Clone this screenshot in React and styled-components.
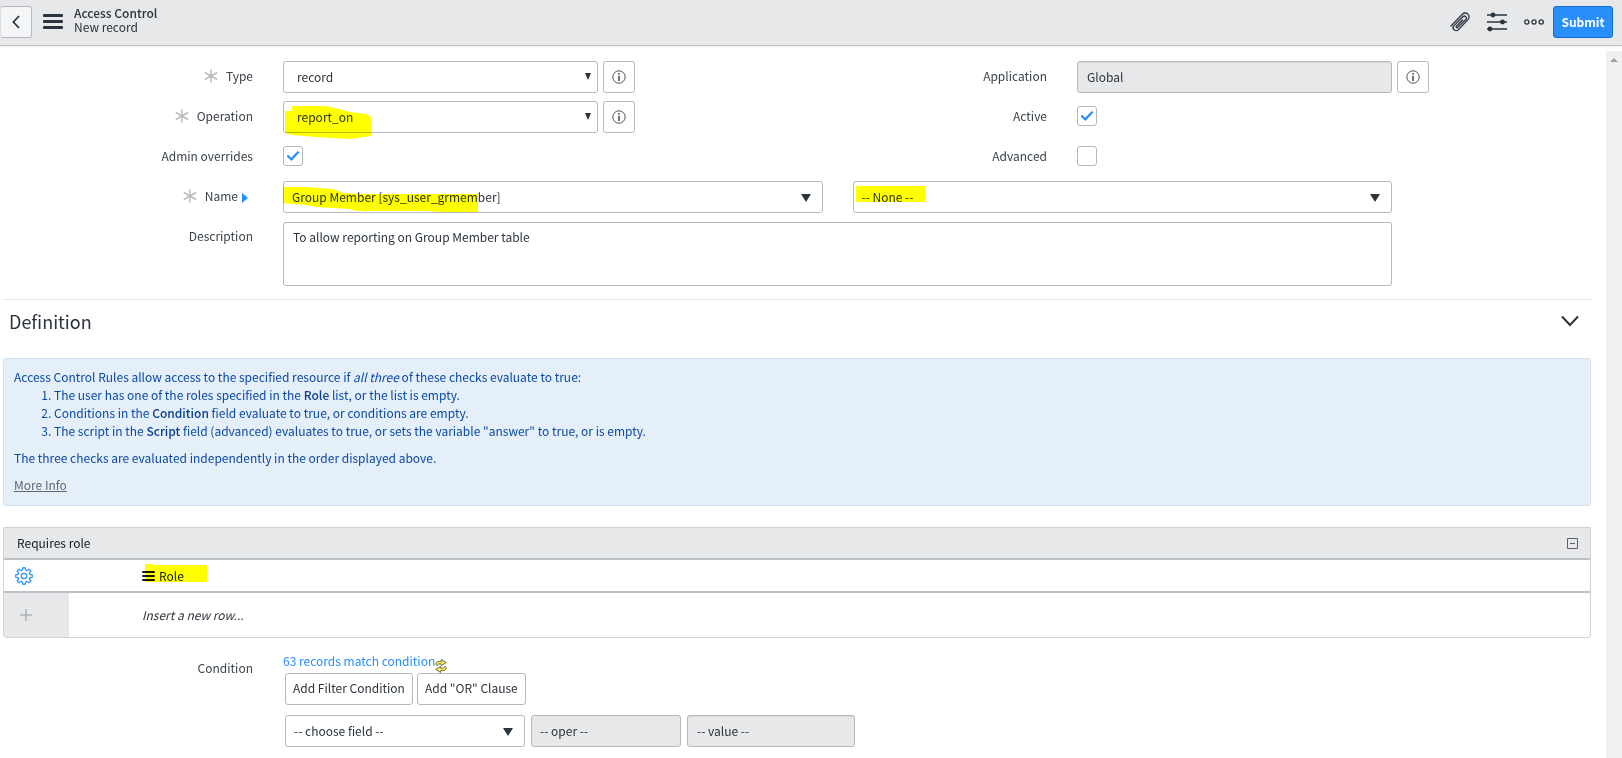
import React from "react";
import styled, { createGlobalStyle, css } from "styled-components";

const c = {
  ink: "#2b343e",
  label: "#3a424a",
  line: "#bdc0c4",
  field: "#b5b8bc",
  bar: "#e6e8ea",
  blue: "#278efc",
  infoText: "#0b4aa3",
};

const GlobalStyle = createGlobalStyle`
  *, *::before, *::after { box-sizing: border-box; }
  body {
    margin: 0;
    background: #fff;
    color: ${c.ink};
    font-family: "Noto Sans CJK SC", "Open Sans", sans-serif;
    font-size: 12px;
    line-height: 18px;
  }
  button, input, select, textarea { font: inherit; color: inherit; margin: 0; }
`;

const Page = styled.div`
  display: flex;
  flex-direction: column;
  min-height: 100vh;
`;

/* ---------- header ---------- */

const Header = styled.header`
  display: flex;
  align-items: center;
  height: 46px;
  padding: 0 9px 2px 0;
  background: ${c.bar};
  border-bottom: 1px solid ${c.line};
  box-shadow: 0 1px 2px rgba(0, 0, 0, 0.08);
`;

const BackButton = styled.button`
  display: flex;
  align-items: center;
  justify-content: center;
  width: 32px;
  height: 32px;
  padding: 0;
  background: #f3f5f7;
  border: 1px solid ${c.field};
  border-left-color: #dcdee0;
  border-radius: 3px;
`;

const IconButton = styled.button`
  display: flex;
  align-items: center;
  justify-content: center;
  padding: 0;
  border: 0;
  background: none;
  color: ${(p) => p.$color || c.ink};
`;

const MenuButton = styled(IconButton)`
  margin: 0 11px;
`;

const Heading = styled.div`
  padding-bottom: 3px;
  line-height: 14px;
`;

const Title = styled.h1`
  margin: 0;
  font-size: 12px;
  font-weight: 500;
`;

const Actions = styled.div`
  display: flex;
  align-items: center;
  gap: 17px;
  margin-left: auto;
`;

const Submit = styled.button`
  height: 32px;
  width: 60px;
  margin-left: -8px;
  padding: 0;
  background: ${c.blue};
  border: 1px solid #0f6fd6;
  border-radius: 3px;
  color: #fff;
  font-weight: 700;
`;

/* ---------- page body ---------- */

const Body = styled.div`
  display: flex;
  flex: 1;
`;

const Content = styled.main`
  flex: 1;
  min-width: 0;
  padding: 15px 15px 0 3px;
`;

const ScrollTrack = styled.div`
  width: 16px;
  margin-top: 5px;
  padding-top: 7px;
  background: #f0f0f0;
  display: flex;
  justify-content: center;
  align-items: flex-start;
`;

/* ---------- form ---------- */

const Columns = styled.div`
  display: grid;
  grid-template-columns: 1fr 1fr;
`;

const Row = styled.div`
  display: grid;
  grid-template-columns: ${(p) => (p.$wide ? "265fr 1139fr 184fr" : "265fr 345fr 184fr")};
  margin-bottom: ${(p) => (p.$last ? 0 : "8px")};
`;

const LabelCell = styled.div`
  display: flex;
  justify-content: flex-end;
  align-items: center;
  gap: 8px;
  height: 32px;
  padding: 0 15px 2px 0;
  color: ${c.label};
`;

const FieldCell = styled.div`
  display: flex;
  align-items: center;
  gap: 30px;
  min-height: 32px;
  padding: ${(p) => (p.$area ? "1px 15px 0" : p.$check ? "0 15px 2px" : "0 15px")};
`;

const AfterCell = styled.div`
  margin-left: -10px;
`;

const Box = styled.div`
  position: relative;
  flex: ${(p) => (p.$width ? "none" : "1")};
  width: ${(p) => (p.$width ? `${p.$width}px` : "auto")};
  min-width: 0;
`;

const control = css`
  display: block;
  width: 100%;
  height: 32px;
  padding: 0 9px 1px;
  background: #fff;
  border: 1px solid ${c.field};
  border-radius: 3px;
  color: ${c.ink};
  opacity: 1;
`;

const SelectControl = styled.select`
  ${control}
  appearance: none;
  padding-left: ${(p) => (p.$indent ? "13px" : "8px")};
  ${(p) => p.disabled && `background: ${c.bar};`}
`;

const TextControl = styled.input`
  ${control}
  ${(p) => p.readOnly && `background: ${c.bar}; box-shadow: inset 0 1px 1px rgba(0,0,0,.07);`}
`;

const AreaControl = styled.textarea`
  ${control}
  height: 64px;
  padding: 5px 9px;
  resize: none;
`;

const Arrow = styled.svg`
  position: absolute;
  top: ${(p) => (p.$small ? "12px" : "13px")};
  right: ${(p) => (p.$small ? "7px" : "12px")};
  fill: #2b333b;
  pointer-events: none;
`;

const Marker = styled.svg`
  position: absolute;
  top: 0;
  left: 0;
  overflow: visible;
  fill: #ff0;
  mix-blend-mode: multiply;
  pointer-events: none;
`;

const Expander = styled.svg`
  margin: 3px 5px 0 -4px;
  fill: ${c.blue};
`;

const Check = styled.input`
  appearance: none;
  width: 20px;
  height: 20px;
  background: #fff;
  border: 1px solid ${c.field};
  border-radius: 3px;
  display: grid;
  place-items: center;
  &:checked::after {
    content: "";
    width: 13px;
    height: 10px;
    background: ${c.blue};
    clip-path: polygon(0 52%, 12% 38%, 36% 68%, 87% 0, 100% 12%, 38% 100%);
  }
`;

const InfoButton = styled.button`
  display: flex;
  align-items: center;
  justify-content: center;
  width: 32px;
  height: 32px;
  padding: 0;
  background: #fff;
  border: 1px solid ${c.field};
  border-radius: 3px;
  color: #4a5056;
`;

/* ---------- definition ---------- */

const SectionHead = styled.div`
  display: flex;
  align-items: center;
  justify-content: space-between;
  height: 44px;
  margin-top: 13px;
  padding: 0 12px 2px 6px;
  border-top: 1px solid #e2e4e6;
`;

const SectionTitle = styled.h2`
  margin: 0;
  font-size: 18px;
  line-height: 28px;
  font-weight: 400;
`;

const Info = styled.section`
  margin-top: 15px;
  padding: 9px 10px 11px;
  background: #e5effa;
  border: 1px solid #cfe0f2;
  border-radius: 3px;
  color: ${c.infoText};
  p { margin: 0 0 9px; }
  p:first-child, p:last-child { margin: 0; }
  ol { margin: 0 0 9px; padding-left: 40px; }
  b { font-weight: 500; color: #0a408f; }
`;

const MoreInfo = styled.a`
  color: #63686d;
  text-decoration: underline;
`;

/* ---------- roles list ---------- */

const Panel = styled.section`
  margin: 21px 0 15px;
  border: 1px solid #d0d2d5;
  border-radius: 0 0 3px 3px;
`;

const PanelHead = styled.div`
  display: flex;
  align-items: center;
  justify-content: space-between;
  height: 32px;
  padding: 0 12px 0 13px;
  background: ${c.bar};
  border-bottom: 2px solid ${c.line};
`;

const PanelTitle = styled.h3`
  margin: 0;
  font-size: 12px;
  font-weight: 400;
  color: #141b22;
`;

const RoleTable = styled.table`
  width: 100%;
  border-collapse: separate;
  border-spacing: 0;
  text-align: left;
`;

const HeadCell = styled.th`
  height: 33px;
  width: ${(p) => (p.$tool ? "65px" : "auto")};
  padding: 0 0 0 ${(p) => (p.$tool ? "11px" : "73px")};
  border-bottom: 2px solid ${c.line};
  font-weight: 400;
  color: #141b22;
`;

const ColumnName = styled.span`
  position: relative;
  display: inline-flex;
  align-items: center;
  gap: 4px;
`;

const ToolCell = styled.td`
  height: 44px;
  padding: 0 0 0 16px;
  background: ${c.bar};
`;

const NewRowCell = styled.td`
  padding: 0 0 0 73px;
  font-style: italic;
`;

/* ---------- condition ---------- */

const ConditionCell = styled.div`
  padding: 0 15px;
`;

const MatchLine = styled.div`
  display: flex;
  align-items: flex-end;
  height: 20px;
`;

const MatchLink = styled.a`
  padding-bottom: 3px;
  color: ${c.blue};
  text-decoration: none;
`;

const Line = styled.div`
  display: flex;
  gap: ${(p) => p.$gap}px;
  margin: 0 0 10px 2px;
`;

const PlainButton = styled.button`
  height: 32px;
  padding: 0 7px 2px;
  background: #fff;
  border: 1px solid ${c.field};
  border-radius: 3px;
  white-space: nowrap;
`;

/* ---------- drawings ---------- */

const Bars = ({ w, h, t }) => (
  <svg width={w} height={h} fill="currentColor" aria-hidden="true">
    <rect width={w} height={t} rx="1" />
    <rect y={(h - t) / 2} width={w} height={t} rx="1" />
    <rect y={h - t} width={w} height={t} rx="1" />
  </svg>
);

const Asterisk = () => (
  <svg width="14" height="14" viewBox="0 0 14 14" stroke="#b9bbbd" strokeWidth="1.5" aria-label="Mandatory">
    <path d="M7 .5v13M.8 3.5l12.4 7M13.2 3.5L.8 10.5" />
  </svg>
);

const InfoIcon = () => (
  <svg width="14" height="14" viewBox="0 0 14 14" aria-hidden="true">
    <circle cx="7" cy="7" r="6.2" fill="none" stroke="currentColor" strokeWidth="1" />
    <path d="M6.2 3h1.6v1.6H6.2zM6.2 5.8h1.6V11H6.2z" fill="currentColor" />
  </svg>
);

const Clip = () => (
  <svg width="20" height="20" viewBox="0 0 20 20" fill="none" stroke="currentColor" strokeWidth="1.3" strokeLinecap="round" aria-hidden="true">
    <path d="M1 14L12.4 2.2a3.8 3.8 0 0 1 5.6 5.4L8.3 17.8a3 3 0 0 1-4.3-4.2l8.9-8.9a2 2 0 0 1 2.9 2.8L7.6 15.4a.8.8 0 0 1-1.2-1.2L12.6 8" />
  </svg>
);

const Sliders = () => (
  <svg width="20" height="20" viewBox="0 0 20 20" stroke="currentColor" strokeWidth="1.6" fill="currentColor" aria-hidden="true">
    <path d="M0 3h20M0 10h20M0 17h20" />
    <circle cx="6" cy="3" r="1.6" />
    <circle cx="15.5" cy="10" r="1.6" />
    <circle cx="3" cy="17" r="1.6" />
  </svg>
);

const Dots = () => (
  <svg width="20" height="6" viewBox="0 0 20 6" fill="none" stroke="currentColor" strokeWidth="1.3" aria-hidden="true">
    <circle cx="2.8" cy="3" r="2.1" />
    <circle cx="10" cy="3" r="2.1" />
    <circle cx="17.2" cy="3" r="2.1" />
  </svg>
);

const gearPoints = Array.from({ length: 8 }, (_, i) =>
  [[-15, 6.2], [-10, 8.3], [10, 8.3], [15, 6.2]].map(([d, r]) => {
    const a = ((i * 45 + d) * Math.PI) / 180;
    return `${(9 + r * Math.sin(a)).toFixed(2)},${(9 - r * Math.cos(a)).toFixed(2)}`;
  }).join(" ")
).join(" ");

const Gear = () => (
  <svg width="18" height="18" viewBox="0 0 18 18" fill="none" stroke="currentColor" strokeWidth="1.2" strokeLinejoin="round" aria-hidden="true">
    <polygon points={gearPoints} />
    <circle cx="9" cy="9" r="2.6" />
  </svg>
);

const swirl = "M1.6 6.6L.6 4.8l1.8-2.4h4V.5l4.8 3.1-4.8 3V4.9H3.8z";
const Refresh = () => (
  <svg width="12" height="14" viewBox="0 0 12 14" fill="#f7ef5a" stroke="#4d4d22" strokeWidth="0.8" strokeLinejoin="round" aria-hidden="true">
    <path d={swirl} />
    <path d={swirl} transform="rotate(180 6 7)" />
  </svg>
);

/* ---------- composed parts ---------- */

const Label = ({ id, required, after, children }) => (
  <LabelCell>
    {required && <Asterisk />}
    <label htmlFor={id}>{children}</label>
    {after}
  </LabelCell>
);

const Select = ({ id, value, small, width, disabled, arrow = true, label, children }) => (
  <Box $width={width}>
    <SelectControl id={id} $indent={small} disabled={disabled} aria-label={label} defaultValue={value}>
      <option>{value}</option>
    </SelectControl>
    {children}
    {arrow && (small ? (
      <Arrow $small width="6" height="7" viewBox="0 0 6 7"><path d="M0 0h6L3 7z" /></Arrow>
    ) : (
      <Arrow width="10" height="8" viewBox="0 0 10 8"><path d="M0 0h10L5 8z" /></Arrow>
    ))}
  </Box>
);

const Highlight = ({ points }) => (
  <Marker width="1" height="1" aria-hidden="true">
    <polygon points={points} />
  </Marker>
);

const Details = () => (
  <AfterCell>
    <InfoButton type="button" aria-label="Show details"><InfoIcon /></InfoButton>
  </AfterCell>
);

export default function App() {
  return (
    <Page>
      <GlobalStyle />
      <Header>
        <BackButton type="button" aria-label="Back">
          <svg width="8" height="14" viewBox="0 0 8 14" fill="none" stroke={c.ink} strokeWidth="1.8"><path d="M7 1L1.4 7 7 13" /></svg>
        </BackButton>
        <MenuButton type="button" aria-label="Menu"><Bars w={20} h={15} t={3} /></MenuButton>
        <Heading>
          <Title>Access Control</Title>
          <div>New record</div>
        </Heading>
        <Actions>
          <IconButton type="button" aria-label="Attachments"><Clip /></IconButton>
          <IconButton type="button" aria-label="Personalize"><Sliders /></IconButton>
          <IconButton type="button" aria-label="More options"><Dots /></IconButton>
          <Submit type="submit">Submit</Submit>
        </Actions>
      </Header>

      <Body>
        <Content>
          <Columns>
            <div>
              <Row>
                <Label id="type" required>Type</Label>
                <FieldCell><Select id="type" value="record" small /></FieldCell>
                <Details />
              </Row>
              <Row>
                <Label id="operation" required>Operation</Label>
                <FieldCell>
                  <Select id="operation" value="report_on" small>
                    <Highlight points="2,10 9,10 9,5 43,5 60,9 67,11 83,13 88,16 88,35 67,38 33,36 10,34 2,32" />
                  </Select>
                </FieldCell>
                <Details />
              </Row>
              <Row>
                <Label id="overrides">Admin overrides</Label>
                <FieldCell $check><Check id="overrides" type="checkbox" defaultChecked /></FieldCell>
              </Row>
            </div>
            <div>
              <Row>
                <Label id="application">Application</Label>
                <FieldCell><Box><TextControl id="application" readOnly value="Global" /></Box></FieldCell>
                <Details />
              </Row>
              <Row>
                <Label id="active">Active</Label>
                <FieldCell $check><Check id="active" type="checkbox" defaultChecked /></FieldCell>
              </Row>
              <Row>
                <Label id="advanced">Advanced</Label>
                <FieldCell $check><Check id="advanced" type="checkbox" /></FieldCell>
              </Row>
            </div>
          </Columns>

          <Row $wide>
            <Label
              id="name"
              required
              after={<Expander width="6" height="10" viewBox="0 0 6 10" aria-hidden="true"><path d="M0 0l6 5-6 5z" /></Expander>}
            >
              Name
            </Label>
            <FieldCell>
              <Select id="name" value="Group Member [sys_user_grmember]">
                <Highlight points="0,6 23,6 50,8 60,12 80,13 195,13 195,31 163,31 143,30 73,30 67,28 33,26 23,24 0,22" />
              </Select>
              <Select value="-- None --" label="Field name">
                <Highlight points="3,5 72,5 72,21 3,21" />
              </Select>
            </FieldCell>
          </Row>
          <Row $wide $last>
            <Label id="description">Description</Label>
            <FieldCell $area>
              <Box><AreaControl id="description" defaultValue="To allow reporting on Group Member table" /></Box>
            </FieldCell>
          </Row>

          <SectionHead>
            <SectionTitle>Definition</SectionTitle>
            <IconButton type="button" aria-label="Collapse section">
              <svg width="18" height="12" viewBox="0 0 18 12" fill="none" stroke="currentColor" strokeWidth="2"><path d="M1 1.5l8 8.5 8-8.5" /></svg>
            </IconButton>
          </SectionHead>

          <Info>
            <p>Access Control Rules allow access to the specified resource if <i>all three</i> of these checks evaluate to true:</p>
            <ol>
              <li>The user has one of the roles specified in the <b>Role</b> list, or the list is empty.</li>
              <li>Conditions in the <b>Condition</b> field evaluate to true, or conditions are empty.</li>
              <li>The script in the <b>Script</b> field (advanced) evaluates to true, or sets the variable "answer" to true, or is empty.</li>
            </ol>
            <p>The three checks are evaluated independently in the order displayed above.</p>
            <p><MoreInfo href="#more">More Info</MoreInfo></p>
          </Info>

          <Panel>
            <PanelHead>
              <PanelTitle>Requires role</PanelTitle>
              <IconButton type="button" aria-label="Collapse list" $color="#5c6167">
                <svg width="11" height="11" fill="none" stroke="currentColor"><path d="M.5.5h10v10H.5zM3 5.5h5" /></svg>
              </IconButton>
            </PanelHead>
            <RoleTable>
              <thead>
                <tr>
                  <HeadCell $tool>
                    <IconButton type="button" aria-label="List settings" $color={c.blue}><Gear /></IconButton>
                  </HeadCell>
                  <HeadCell>
                    <ColumnName>
                      <Bars w={13} h={10} t={2} />
                      Role
                      <Highlight points="3,-3 10,-3 12,-2 65,-2 65,15 3,15" />
                    </ColumnName>
                  </HeadCell>
                </tr>
              </thead>
              <tbody>
                <tr>
                  <ToolCell>
                    <IconButton type="button" aria-label="Add row" $color="#afb2b5">
                      <svg width="12" height="12" stroke="currentColor" strokeWidth="1.5"><path d="M6 0v12M0 6h12" /></svg>
                    </IconButton>
                  </ToolCell>
                  <NewRowCell>Insert a new row...</NewRowCell>
                </tr>
              </tbody>
            </RoleTable>
          </Panel>

          <Row $wide $last>
            <Label id="condition-field">Condition</Label>
            <ConditionCell>
              <MatchLine>
                <MatchLink href="#records">63 records match condition</MatchLink>
                <IconButton type="button" aria-label="Refresh count"><Refresh /></IconButton>
              </MatchLine>
              <Line $gap={4}>
                <PlainButton type="button">Add Filter Condition</PlainButton>
                <PlainButton type="button">Add "OR" Clause</PlainButton>
              </Line>
              <Line $gap={6}>
                <Select id="condition-field" value="-- choose field --" width={240} />
                <Select value="-- oper --" label="Operator" width={150} disabled arrow={false} />
                <Box $width={168}><TextControl readOnly value="-- value --" aria-label="Value" /></Box>
              </Line>
            </ConditionCell>
          </Row>
        </Content>
        <ScrollTrack aria-hidden="true">
          <svg width="8" height="4" fill="#a0a0a0"><path d="M0 4l4-4 4 4z" /></svg>
        </ScrollTrack>
      </Body>
    </Page>
  );
}
